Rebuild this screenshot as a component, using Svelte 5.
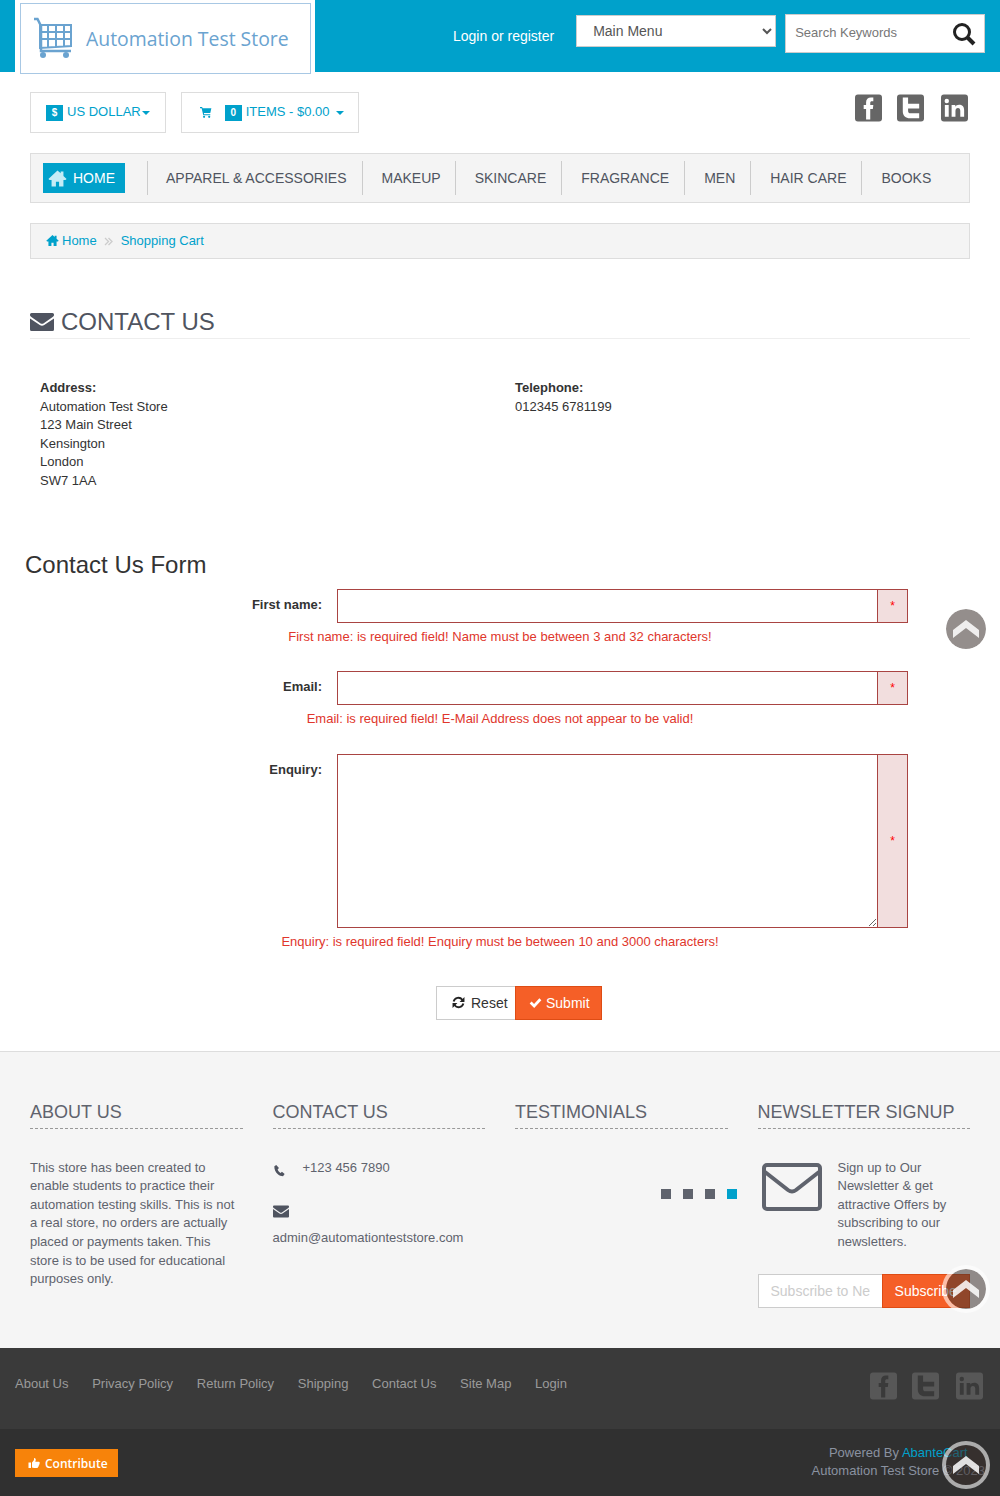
<script>
const navItems = ['APPAREL & ACCESSORIES', 'MAKEUP', 'SKINCARE', 'FRAGRANCE', 'MEN', 'HAIR CARE', 'BOOKS'];
const footerLinks = ['About Us', 'Privacy Policy', 'Return Policy', 'Shipping', 'Contact Us', 'Site Map', 'Login'];
const addressLines = ['Automation Test Store', '123 Main Street', 'Kensington', 'London', 'SW7 1AA'];
const newsletterLines = ['Sign up to Our', 'Newsletter & get', 'attractive Offers by', 'subscribing to our', 'newsletters.'];
</script>

{#snippet envelope()}
  <path d="M0 3.500A1.500 1.500 0 0 1 1.500 2h21A1.500 1.500 0 0 1 24 3.500v.7c0 .6-.5 1.200-1 1.600l-9.600 6.600c-.8.5-2 .5-2.800 0L1 5.800C.5 5.400 0 4.800 0 4.200zM0 7.400l9.800 6.700c1.300.9 3.100.9 4.400 0L24 7.400v11.100A1.500 1.500 0 0 1 22.500 20h-21A1.500 1.500 0 0 1 0 18.500z"/>
{/snippet}

{#snippet home()}
  <path d="M12 2 .5 12.500 2 14h2.500v8H10v-6h4v6h5.500v-8H22l1.500-1.500L19.500 8.800V3h-3.500v2.500z"/>
{/snippet}

{#snippet cart()}
  <path d="M0 2h4l.7 2H21l-2 9H7.200l.4 2H19v2H6L3 4H0z"/><circle cx="7.500" cy="20" r="2"/><circle cx="17" cy="20" r="2"/>
{/snippet}

{#snippet socials(cls)}
  <div class="socials {cls}">
    <svg viewBox="0 0 28 28"><rect class="tile" width="28" height="28" rx="3"/><path class="mark" d="M11.500 26V15H9v-4h2.500V8c0-3.500 2-5 5-5h2.500v4h-1.500c-1.200 0-1.700.6-1.700 1.700V11h3.200l-.5 4h-2.700v11z"/></svg>
    <svg viewBox="0 0 28 28"><rect class="tile" width="28" height="28" rx="3"/><path class="mark" d="M6 3h5.500v6.500H23v5H11.500v2.500c0 1.800.9 2.500 2.600 2.500H23v5h-9.500C9 24.500 6 21.800 6 17.500z"/></svg>
    <svg class="last" viewBox="0 0 28 28"><rect class="tile" width="28" height="28" rx="3"/><path class="mark" d="M4 11h4v12H4zM6 4.500a2.300 2.300 0 1 1 0 4.600 2.300 2.300 0 0 1 0-4.600zM11 11h3.800v1.700c.8-1.300 2.200-2 3.900-2 3.200 0 5.300 1.900 5.300 5.600V23h-4v-6c0-1.900-.8-3-2.400-3-1.600 0-2.600 1.100-2.600 3v6h-4z"/></svg>
  </div>
{/snippet}

<header class="top">
  <div class="logo-slot">
    <a class="logo" href="#top">
      <svg class="logo-cart" viewBox="0 0 42 44" fill="none" stroke="#6aa3d0">
        <path stroke-width="2.500" d="M1 2h3.500l3.500 7v25h30"/>
        <path stroke-width="2" d="M7 8h31v21l-31 2zM7 15h31M7 22h31M15 8v22M23 8v22M31 8v21"/>
        <circle cx="10" cy="38" r="3" fill="#6aa3d0" stroke="none"/>
        <circle cx="33" cy="38" r="3" fill="#6aa3d0" stroke="none"/>
      </svg>
      <span class="logo-text">Automation Test Store</span>
    </a>
  </div>
  <div class="top-right">
    <a class="login" href="#top">Login or register</a>
    <select class="main-menu"><option>Main Menu</option></select>
    <div class="search">
      <input type="text" placeholder="Search Keywords" />
      <svg viewBox="0 0 24 24" fill="none" stroke="#222"><circle cx="10" cy="10" r="7.500" stroke-width="3"/><path stroke-width="4" d="m15.500 15.500 6.500 6.500"/></svg>
    </div>
  </div>
</header>

<main class="page">
  <div class="tools">
    <div class="tool">
      <span class="badge">$</span><span class="tool-text">US DOLLAR</span><span class="caret tight"></span>
    </div>
    <div class="tool cart-tool">
      <svg class="cart-icon" viewBox="0 0 24 24" fill="#00a1cb">{@render cart()}</svg>
      <span class="badge">0</span><span class="tool-text">ITEMS - $0.00</span><span class="caret"></span>
    </div>
    {@render socials('light')}
  </div>

  <nav class="nav">
    <a class="nav-home" href="#top"><svg viewBox="0 0 24 24" fill="#c4ecf6">{@render home()}</svg>HOME</a>
    <ul>
      {#each navItems as item}
        <li><a href="#top">{item}</a></li>
      {/each}
    </ul>
  </nav>

  <div class="crumbs">
    <svg viewBox="0 0 24 24" fill="#00a1cb">{@render home()}</svg>
    <a href="#top">Home</a>
    <svg class="crumb-sep" viewBox="0 0 9 9" fill="none" stroke="#ccc" stroke-width="1.300"><path d="m1 1 3.500 3.500L1 8M4.500 1 8 4.500 4.500 8"/></svg>
    <a href="#top">Shopping Cart</a>
  </div>

  <h1 class="title"><svg viewBox="0 0 24 22" fill="#4f5460">{@render envelope()}</svg>CONTACT US</h1>

  <section class="info">
    <div>
      <b>Address:</b>
      {#each addressLines as line}
        <div>{line}</div>
      {/each}
    </div>
    <div>
      <b>Telephone:</b>
      <div>012345 6781199</div>
    </div>
  </section>

  <h2 class="form-title">Contact Us Form</h2>

  <form class="form" onsubmit={(e) => e.preventDefault()}>
    <div class="row">
      <label for="first">First name:</label>
      <div class="group"><input id="first" type="text" /><span class="addon">*</span></div>
    </div>
    <p class="error">First name: is required field! Name must be between 3 and 32 characters!</p>

    <div class="row">
      <label for="email">Email:</label>
      <div class="group"><input id="email" type="text" /><span class="addon">*</span></div>
    </div>
    <p class="error tall">Email: is required field! E-Mail Address does not appear to be valid!</p>

    <div class="row enquiry">
      <label for="enquiry">Enquiry:</label>
      <div class="group"><textarea id="enquiry"></textarea><span class="addon">*</span></div>
    </div>
    <p class="error">Enquiry: is required field! Enquiry must be between 10 and 3000 characters!</p>

    <div class="actions">
      <button type="button" class="reset">
        <svg viewBox="0 0 24 24" fill="none" stroke="#222" stroke-width="3.500"><path d="M3 10a9 9 0 0 1 16-3l2 2M21 14a9 9 0 0 1-16 3l-2-2"/><path fill="#222" stroke="none" d="M23 2v9h-9zM1 22v-9h9z"/></svg>
        Reset
      </button>
      <button type="submit" class="submit">
        <svg viewBox="0 0 24 24" fill="none" stroke="#fff" stroke-width="5"><path d="m3 12 6.500 6.500L21 6"/></svg>
        Submit
      </button>
    </div>
  </form>
</main>

<footer>
  <div class="footer-main">
    <div class="col">
      <h3>ABOUT US</h3>
      <p class="about">This store has been created to enable students to practice their automation testing skills. This is not a real store, no orders are actually placed or payments taken. This store is to be used for educational purposes only.</p>
    </div>
    <div class="col">
      <h3>CONTACT US</h3>
      <div class="phone">
        <svg viewBox="0 0 24 24" fill="#4f5460"><path d="M6 2 2.500 4C2 10 5 15.500 9 19c3 2.700 6 3.500 9.500 3.500l3-4-5-4-2.500 2c-2.500-1.500-4.500-4-5.500-6.500l2.500-2.500z"/></svg>
        +123 456 7890
      </div>
      <svg class="mail" viewBox="0 0 24 22" fill="#4f5460">{@render envelope()}</svg>
      <div class="address-mail">admin@automationteststore.com</div>
    </div>
    <div class="col">
      <h3>TESTIMONIALS</h3>
      <div class="dots"><i></i><i></i><i></i><i class="on"></i></div>
    </div>
    <div class="col">
      <h3>NEWSLETTER SIGNUP</h3>
      <div class="news">
        <svg viewBox="0 0 60 48" fill="none" stroke="#5f636d" stroke-width="4" stroke-linejoin="round">
          <rect x="2" y="2" width="56" height="44" rx="3"/>
          <path d="M3 9l23 18c2.500 1.800 5.500 1.800 8 0L57 9"/>
        </svg>
        <div>
          {#each newsletterLines as line}
            <div>{line}</div>
          {/each}
        </div>
      </div>
      <div class="subscribe">
        <input type="text" placeholder="Subscribe to Newsletter" />
        <button type="button">Subscribe</button>
      </div>
    </div>
  </div>

  <div class="footer-links">
    <ul>
      {#each footerLinks as link}
        <li><a href="#top">{link}</a></li>
      {/each}
    </ul>
    {@render socials('dark')}
  </div>

  <div class="footer-bottom">
    <a class="contribute" href="#top">
      <svg viewBox="0 0 24 24" fill="#fff"><path d="M1 11h5v11H1zM8 11l4-5V2c2.500 0 3.500 1.500 3.500 3.500 0 1.500-.5 2.500-1 4h6.500c1.500 0 2.500 1 2.500 2.300 0 1-.5 1.700-1 2 .5 1.500 0 2.500-1 3.200.2 1.500-.5 2.500-1.500 3 0 1.300-1 2-2.500 2H12c-1.500 0-2.500-.5-4-1z"/></svg>
      Contribute
    </a>
    <div class="powered">
      <div>Powered By <a href="#top">AbanteCart</a></div>
      <div>Automation Test Store © 2023</div>
    </div>
  </div>
</footer>

<a class="to-top first" href="#top" aria-label="Back to top"><svg viewBox="0 0 26 18"><path d="M0 10 13 0l13 10v8L13 8 0 18z"/></svg></a>
<a class="to-top second" href="#top" aria-label="Back to top"><svg viewBox="0 0 26 18"><path d="M0 10 13 0l13 10v8L13 8 0 18z"/></svg></a>
<a class="to-top third" href="#top" aria-label="Back to top"><svg viewBox="0 0 26 18"><path d="M0 10 13 0l13 10v8L13 8 0 18z"/></svg></a>

<style>
  :global(body) {
    font-family: "Liberation Sans", Arial, sans-serif;
    font-size: 13px;
    color: #333;
    background: #fff;
  }
  :global(#app) {
    position: relative;
  }
  a {
    text-decoration: none;
    color: inherit;
  }
  ul {
    list-style: none;
    margin: 0;
    padding: 0;
  }

  /* header */
  .top {
    display: flex;
    height: 72px;
    padding-left: 15px;
    background: #00a1cb;
  }
  .logo-slot {
    width: 300px;
    background: #fff;
    padding: 3px 4px 0 5px;
    box-sizing: border-box;
  }
  .logo {
    display: flex;
    align-items: center;
    box-sizing: border-box;
    height: 71px;
    padding: 0 0 0 12px;
    background: #fff;
    border: 1px solid #a8c8e4;
    position: relative;
  }
  .logo-cart {
    width: 42px;
    height: 44px;
    margin-right: 11px;
  }
  .logo-text {
    font-family: "Open Sans", sans-serif;
    font-size: 19.400px;
    color: #6aa3d0;
    white-space: nowrap;
  }
  .top-right {
    flex: 1;
    display: flex;
    align-items: flex-start;
  }
  .login {
    margin: 28px 22px 0 138px;
    color: #fff;
    font-size: 14px;
    white-space: nowrap;
  }
  .main-menu {
    width: 200px;
    height: 32px;
    margin-top: 15px;
    padding-left: 12px;
    border: 1px solid #ccc;
    border-radius: 0;
    background: #fff;
    color: #555;
    font: 14px "Liberation Sans", Arial, sans-serif;
  }
  .search {
    display: flex;
    align-items: center;
    box-sizing: border-box;
    width: 200px;
    height: 39px;
    margin: 14px 0 0 9px;
    padding: 0 8px 0 9px;
    background: #fff;
    border: 1px solid #ccc;
  }
  .search input {
    flex: 1;
    min-width: 0;
    border: 0;
    outline: 0;
    padding: 0 0 2px;
    font: 13px "Liberation Sans", Arial, sans-serif;
  }
  .search input::placeholder {
    color: #777;
    opacity: 1;
  }
  .search svg {
    width: 24px;
    height: 24px;
  }

  /* tools row */
  .page {
    padding: 20px 30px 0;
  }
  .tools {
    display: flex;
    gap: 15px;
    height: 41px;
  }
  .tool {
    display: flex;
    align-items: center;
    box-sizing: border-box;
    height: 41px;
    padding: 0 15px;
    border: 1px solid #ddd;
    color: #00a1cb;
  }
  .cart-tool {
    padding: 0 14px 0 18px;
  }
  .cart-icon {
    width: 13px;
    height: 13px;
    margin-right: 12px;
  }
  .badge {
    width: 17px;
    height: 16px;
    margin: 1px 4px 0 0;
    background: #00a1cb;
    color: #fff;
    font-size: 10px;
    font-weight: bold;
    line-height: 16px;
    text-align: center;
  }
  .tool-text {
    margin-top: -3px;
  }
  .caret {
    width: 0;
    height: 0;
    margin-left: 6px;
    border: 4px solid transparent;
    border-top-color: #00a1cb;
    border-bottom-width: 0;
  }
  .caret.tight {
    margin-left: 1px;
  }
  .socials {
    display: flex;
    gap: 15px;
  }
  .socials svg {
    width: 27px;
    height: 28px;
  }
  .socials .last {
    margin-left: 2px;
  }
  .light {
    margin: 2px 2px 0 auto;
  }
  .light .tile {
    fill: #666;
  }
  .mark {
    fill: #fff;
  }
  .dark .tile {
    fill: #575757;
  }
  .dark .mark {
    fill: #3a3a3a;
  }

  /* nav */
  .nav {
    display: flex;
    align-items: center;
    box-sizing: border-box;
    height: 50px;
    margin-top: 20px;
    padding: 0 12px;
    background: #f4f4f4;
    border: 1px solid #ddd;
    font-size: 14px;
  }
  .nav-home {
    display: flex;
    align-items: center;
    gap: 6px;
    box-sizing: border-box;
    width: 82px;
    height: 30px;
    margin-right: 22px;
    padding-left: 5px;
    background: #00a1cb;
    color: #fff;
  }
  .nav-home svg {
    width: 19px;
    height: 19px;
  }
  .nav ul {
    display: flex;
  }
  .nav li {
    display: flex;
    align-items: center;
    height: 34px;
    padding: 0 15px 0 19px;
    border-left: 1px solid #ccc;
    color: #4f5460;
    white-space: nowrap;
  }
  .nav li:first-child {
    padding-left: 18px;
  }
  .nav li:nth-child(2) {
    padding-right: 14px;
  }

  /* breadcrumb */
  .crumbs {
    display: flex;
    align-items: center;
    box-sizing: border-box;
    height: 36px;
    margin-top: 20px;
    padding: 0 0 1px 15px;
    background: #f4f4f4;
    border: 1px solid #ddd;
    color: #00a1cb;
  }
  .crumbs svg {
    width: 13px;
    height: 13px;
    margin-right: 3px;
  }
  .crumbs .crumb-sep {
    width: 9px;
    height: 9px;
    margin: 1px 8px 0 7px;
  }

  /* contact */
  .title {
    display: flex;
    align-items: center;
    box-sizing: border-box;
    height: 35px;
    margin: 45px 0 0;
    padding-top: 2px;
    border-bottom: 1px solid #eee;
    font-size: 24px;
    font-weight: normal;
    color: #4f5460;
  }
  .title svg {
    width: 24px;
    height: 22px;
    margin-right: 7px;
  }
  .info {
    display: grid;
    grid-template-columns: 475px 1fr;
    margin-top: 40px;
    padding-left: 10px;
    line-height: 18.600px;
  }
  .form-title {
    margin: 60px 0 0 -5px;
    font-size: 24px;
    font-weight: normal;
    line-height: 28px;
    color: #333;
  }

  /* form */
  .form {
    margin-top: 10px;
  }
  .row {
    display: flex;
    align-items: flex-start;
    padding-right: 62px;
  }
  .row label {
    flex: none;
    width: 277px;
    margin-left: 15px;
    padding: 8px 15px 0 0;
    font-weight: bold;
    text-align: right;
    white-space: nowrap;
  }
  .group {
    flex: 1;
    display: flex;
    height: 34px;
    box-sizing: border-box;
    border: 1px solid #a94442;
  }
  .group input,
  .group textarea {
    flex: 1;
    min-width: 0;
    box-sizing: border-box;
    border: 0;
    outline: 0;
    padding: 6px 12px;
    background: #fff;
  }
  .addon {
    display: flex;
    align-items: center;
    justify-content: center;
    width: 29px;
    flex: none;
    border-left: 1px solid #a94442;
    background: #f2dede;
    color: #f00;
    font-size: 12px;
  }
  .enquiry .group {
    height: 174px;
  }
  .error {
    margin: 0;
    height: 48px;
    padding-top: 5px;
    box-sizing: border-box;
    color: #e0362c;
    text-align: center;
    line-height: 18px;
  }
  .error.tall {
    height: 49px;
  }
  .actions {
    display: flex;
    justify-content: center;
    margin-top: 10px;
    padding-left: 38px;
  }
  .actions button {
    display: flex;
    align-items: center;
    gap: 4px;
    box-sizing: border-box;
    height: 34px;
    font: 14px "Liberation Sans", Arial, sans-serif;
    border-radius: 0;
  }
  .actions svg {
    width: 13px;
    height: 13px;
  }
  .actions .reset {
    width: 79px;
    padding: 0 0 0 15px;
    gap: 6px;
    background: #fff;
    border: 1px solid #ccc;
    border-right: 0;
    color: #333;
  }
  .submit {
    width: 87px;
    padding: 0 0 0 13px;
    background: #f55f27;
    border: 1px solid #de4c14;
    color: #fff;
  }

  /* footer */
  footer {
    margin-top: 31px;
  }
  .footer-main {
    display: grid;
    grid-template-columns: repeat(4, 1fr);
    gap: 30px;
    box-sizing: border-box;
    height: 297px;
    padding: 50px 30px 0;
    background: #f5f5f5;
    border-top: 1px solid #ddd;
    color: #5f636d;
    line-height: 18.600px;
  }
  h3 {
    margin: 0 0 30px;
    height: 26px;
    border-bottom: 1px dashed #999;
    font-size: 18px;
    font-weight: normal;
    line-height: 21px;
    color: #5f636d;
    white-space: nowrap;
  }
  .about {
    margin: 0;
  }
  .phone {
    display: flex;
    gap: 17px;
    align-items: flex-start;
  }
  .phone svg {
    width: 13px;
    height: 13px;
    margin-top: 5px;
  }
  .mail {
    display: block;
    width: 16px;
    height: 15px;
    margin-top: 27px;
  }
  .address-mail {
    margin-top: 10px;
  }
  .dots {
    display: flex;
    justify-content: flex-end;
    gap: 12px;
    margin: 60px -9px 0 0;
  }
  .dots i {
    width: 10px;
    height: 10px;
    background: #5f636d;
  }
  .dots i.on {
    background: #00a1cb;
  }
  .news {
    display: flex;
    gap: 16px;
    padding-left: 4px;
  }
  .news svg {
    flex: none;
    width: 60px;
    height: 48px;
    margin-top: 4px;
  }
  .subscribe {
    display: flex;
    height: 34px;
    margin-top: 22px;
  }
  .subscribe input {
    width: 124px;
    box-sizing: border-box;
    padding: 0 12px;
    background: #fff;
    border: 1px solid #ccc;
    border-right: 0;
    outline: 0;
    font: 14px "Liberation Sans", Arial, sans-serif;
  }
  .subscribe input::placeholder {
    color: #ccc;
    opacity: 1;
  }
  .subscribe button {
    flex: 1;
    padding: 0;
    background: #f55f27;
    border: 1px solid #de4c14;
    border-radius: 0;
    color: #fff;
    font: 14px "Liberation Sans", Arial, sans-serif;
  }

  .footer-links {
    display: flex;
    justify-content: space-between;
    box-sizing: border-box;
    height: 81px;
    padding: 28px 17px 0 15px;
    background: #3a3a3a;
  }
  .footer-links ul {
    display: flex;
    gap: 23.700px;
    line-height: 16px;
    color: #9a9a9a;
  }
  .dark svg {
    height: 28px;
    margin-top: -4px;
  }
  .footer-bottom {
    display: flex;
    justify-content: space-between;
    box-sizing: border-box;
    height: 67px;
    padding: 20px 15px 0;
    background: #303030;
  }
  .contribute {
    display: flex;
    align-items: center;
    gap: 5px;
    box-sizing: border-box;
    width: 103px;
    height: 28px;
    padding: 1px 0 0 13px;
    background: #f7830a;
    color: #fff;
    font-family: "Open Sans", sans-serif;
    font-size: 12px;
    font-weight: 600;
  }
  .contribute svg {
    width: 12px;
    height: 12px;
  }
  .powered {
    margin-top: -5px;
    text-align: center;
    line-height: 18px;
    color: #8a92a0;
  }
  .powered a {
    color: #00a1cb;
  }

  /* back to top buttons sit over the page */
  .to-top {
    position: absolute;
    display: flex;
    align-items: center;
    justify-content: center;
    box-sizing: content-box;
    width: 40px;
    height: 40px;
    border-radius: 50%;
    background: rgba(60, 50, 45, 0.55);
    background-clip: padding-box;
    border: 4px solid rgba(255, 255, 255, 0.6);
    left: 942px;
  }
  .to-top svg {
    width: 26px;
    height: 18px;
    fill: rgba(255, 255, 255, 0.85);
  }
  .first {
    top: 605px;
  }
  .second {
    top: 1265px;
  }
  .third {
    top: 1441px;
  }
</style>
